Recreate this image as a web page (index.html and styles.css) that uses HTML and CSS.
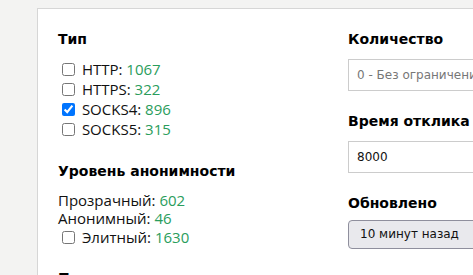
FILE: index.html
```html
<!DOCTYPE html>
<html lang="ru">
<head>
<meta charset="utf-8">
<link rel="stylesheet" href="styles.css">
</head>
<body>
<div class="card">
  <div class="col left">
    <h3 class="h first">Тип</h3>
    <ul class="checks">
      <li><label><input type="checkbox"> HTTP: <span class="n">1067</span></label></li>
      <li><label><input type="checkbox"> HTTPS: <span class="n">322</span></label></li>
      <li><label><input type="checkbox" checked> SOCKS4: <span class="n">896</span></label></li>
      <li><label><input type="checkbox"> SOCKS5: <span class="n">315</span></label></li>
    </ul>
    <h3 class="h second">Уровень анонимности</h3>
    <div class="plain">Прозрачный: <span class="n">602</span></div>
    <div class="plain">Анонимный: <span class="n">46</span></div>
    <ul class="checks inset">
      <li><label><input type="checkbox"> Элитный: <span class="n">1630</span></label></li>
    </ul>
    <h3 class="h third">Порт</h3>
  </div>
  <div class="col right">
    <h3 class="h first">Количество</h3>
    <input class="field" type="text" placeholder="0 - Без ограничений">
    <h3 class="h next">Время отклика</h3>
    <input class="field" type="text" value="8000">
    <h3 class="h next">Обновлено</h3>
    <div class="box">10 минут назад</div>
  </div>
</div>
</body>
</html>
```
FILE: styles.css
```css
html, body {
  margin: 0;
  padding: 0;
  overflow: hidden;
  background: #f3f3f2;
}
body {
  font-family: "Open Sans", "Noto Sans", sans-serif;
  color: #111;
}
.card {
  margin: 8px 0 0 37px;
  width: 620px;
  height: 400px;
  box-sizing: border-box;
  background: #fff;
  border: 1px solid #d6d6d6;
  padding: 20px 20px;
  display: grid;
  grid-template-columns: 290px 1fr;
}
.h {
  font-family: "DejaVu Sans", sans-serif;
  font-weight: bold;
  font-size: 14px;
  line-height: 20px;
  margin: 0;
  color: #000;
}
.left .first { margin-top: 0; }
.right .first { margin-top: 0; }
.checks {
  list-style: none;
  margin: 0;
  padding: 0;
}
.left .checks:first-of-type { margin-top: 10px; }
.checks li {
  height: 20px;
  line-height: 20px;
  font-size: 15px;
  white-space: nowrap;
}
.checks input {
  margin: 0 3px 0 4px;
  width: 13px;
  height: 13px;
  vertical-align: -1px;
}
.n { color: #2a9d5c; }
.second { margin-top: 22px; }
.plain {
  font-size: 15px;
  line-height: 18px;
}
.second + .plain { margin-top: 10px; }
.inset { margin-top: 0; }
.third { margin-top: 21px; }
.field {
  display: block;
  width: 100%;
  box-sizing: border-box;
  height: 32px;
  margin: 10px 0 0;
  padding: 0 8px;
  border: 1px solid #cccccc;
  border-radius: 0;
  font-family: "DejaVu Sans", sans-serif;
  font-size: 12px;
  color: #111;
  background: #fff;
  outline: none;
}
.field::placeholder { color: #777; }
.next { margin-top: 20px; }
.box {
  margin-top: 7px;
  height: 29px;
  box-sizing: border-box;
  border: 1px solid #8f8f9d;
  border-radius: 4px;
  background: #e9e9ed;
  padding: 0 11px;
  line-height: 27px;
  font-family: "DejaVu Sans", sans-serif;
  font-size: 12px;
  color: #111;
}
```
